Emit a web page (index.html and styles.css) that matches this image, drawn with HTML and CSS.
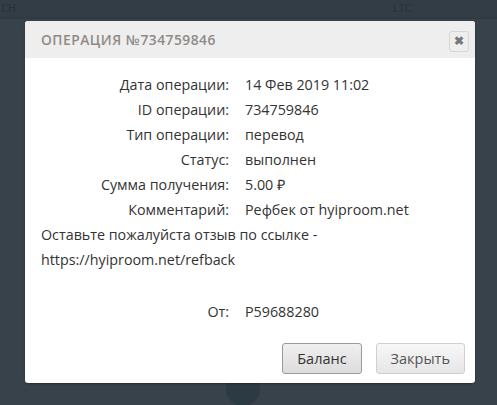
FILE: index.html
```html
<!DOCTYPE html>
<html lang="ru">
<head>
  <meta charset="UTF-8">
  <meta name="viewport" content="width=device-width, initial-scale=1.0">
  <title>Операция</title>
  <link rel="stylesheet" href="styles.css">
</head>
<body>
  <div class="topbar">
    <span class="coin">CH</span>
    <span class="coin coin-right">LTC</span>
  </div>
  <div class="backdrop">
    <div class="round"></div>
  </div>

  <div class="modal">
    <div class="modal-header">
      <h2>Операция №734759846</h2>
      <button class="close" type="button">&#10006;</button>
    </div>

    <div class="modal-body">
      <div class="row"><span class="label">Дата операции:</span><span class="value">14 Фев 2019 11:02</span></div>
      <div class="row"><span class="label">ID операции:</span><span class="value">734759846</span></div>
      <div class="row"><span class="label">Тип операции:</span><span class="value">перевод</span></div>
      <div class="row"><span class="label">Статус:</span><span class="value">выполнен</span></div>
      <div class="row"><span class="label">Сумма получения:</span><span class="value">5.00 &#8381;</span></div>
      <div class="row"><span class="label">Комментарий:</span><span class="value">Рефбек от hyiproom.net</span></div>
      <p class="comment">Оставьте пожалуйста отзыв по ссылке - https://hyiproom.net/refback</p>
      <div class="row row-from"><span class="label">От:</span><span class="value">P59688280</span></div>
    </div>

    <div class="modal-footer">
      <button class="btn btn-active" type="button">Баланс</button>
      <button class="btn" type="button">Закрыть</button>
    </div>
  </div>
</body>
</html>
```

FILE: styles.css
```css
body {
    margin: 0;
    background-color: #37424a;
    font-family: "Open Sans", Arial, sans-serif;
    height: 405px;
    overflow: hidden;
    position: relative;
}

.topbar {
    height: 17px;
    background-color: #323d45;
    border-bottom: 2px solid #2f3a41;
    position: relative;
}

.coin {
    position: absolute;
    top: 1px;
    left: 1px;
    font-size: 11px;
    line-height: 14px;
    color: #27323b;
}

.coin-right {
    left: 393px;
}

.round {
    position: absolute;
    left: 226px;
    top: 372px;
    width: 34px;
    height: 34px;
    border-radius: 50%;
    background-color: #2c3a44;
}

.modal {
    position: absolute;
    left: 25px;
    top: 21px;
    width: 450px;
    height: 362px;
    background-color: #ffffff;
    border-radius: 3px;
    box-shadow: 0 1px 2px rgba(0, 0, 0, 0.3);
    display: flex;
    flex-direction: column;
    overflow: hidden;
}

.modal-header {
    height: 37px;
    background-color: #eeeeee;
    display: flex;
    align-items: center;
    justify-content: space-between;
    padding: 0 6px 0 16px;
}

.modal-header h2 {
    margin: 0;
    font-family: "Open Sans", sans-serif;
    font-size: 13.8px;
    font-weight: 600;
    letter-spacing: 0.5px;
    text-transform: uppercase;
    color: #8e8a86;
}

.close {
    width: 20px;
    height: 21px;
    padding: 0;
    border: 1px solid #d6d6d6;
    border-radius: 3px;
    background-color: #eeeeee;
    color: #787878;
    font-size: 12px;
    font-weight: bold;
    line-height: 19px;
    margin-top: 3px;
}

.modal-body {
    flex: 1;
    padding: 14px 16px 0 16px;
    font-size: 14.3px;
    color: #333333;
}

.row {
    display: flex;
    line-height: 25px;
}

.label {
    width: 188px;
    text-align: right;
    padding-right: 16px;
}

.comment {
    margin: 0;
    line-height: 25px;
}

.row-from {
    margin-top: 27px;
}

.modal-footer {
    display: flex;
    justify-content: flex-end;
    gap: 14px;
    padding: 0 10px 9px 0;
}

.btn {
    height: 31px;
    padding: 0 14px;
    border: 1px solid #cfcfcf;
    border-radius: 3px;
    background: linear-gradient(#f7f7f7, #e6e6e6);
    font-family: "Open Sans", Arial, sans-serif;
    font-size: 14.5px;
    color: #555555;
}

.btn-active {
    border-color: #9a9a9a;
    color: #333333;
    background: linear-gradient(#f0f0f0, #dcdcdc);
}
```
